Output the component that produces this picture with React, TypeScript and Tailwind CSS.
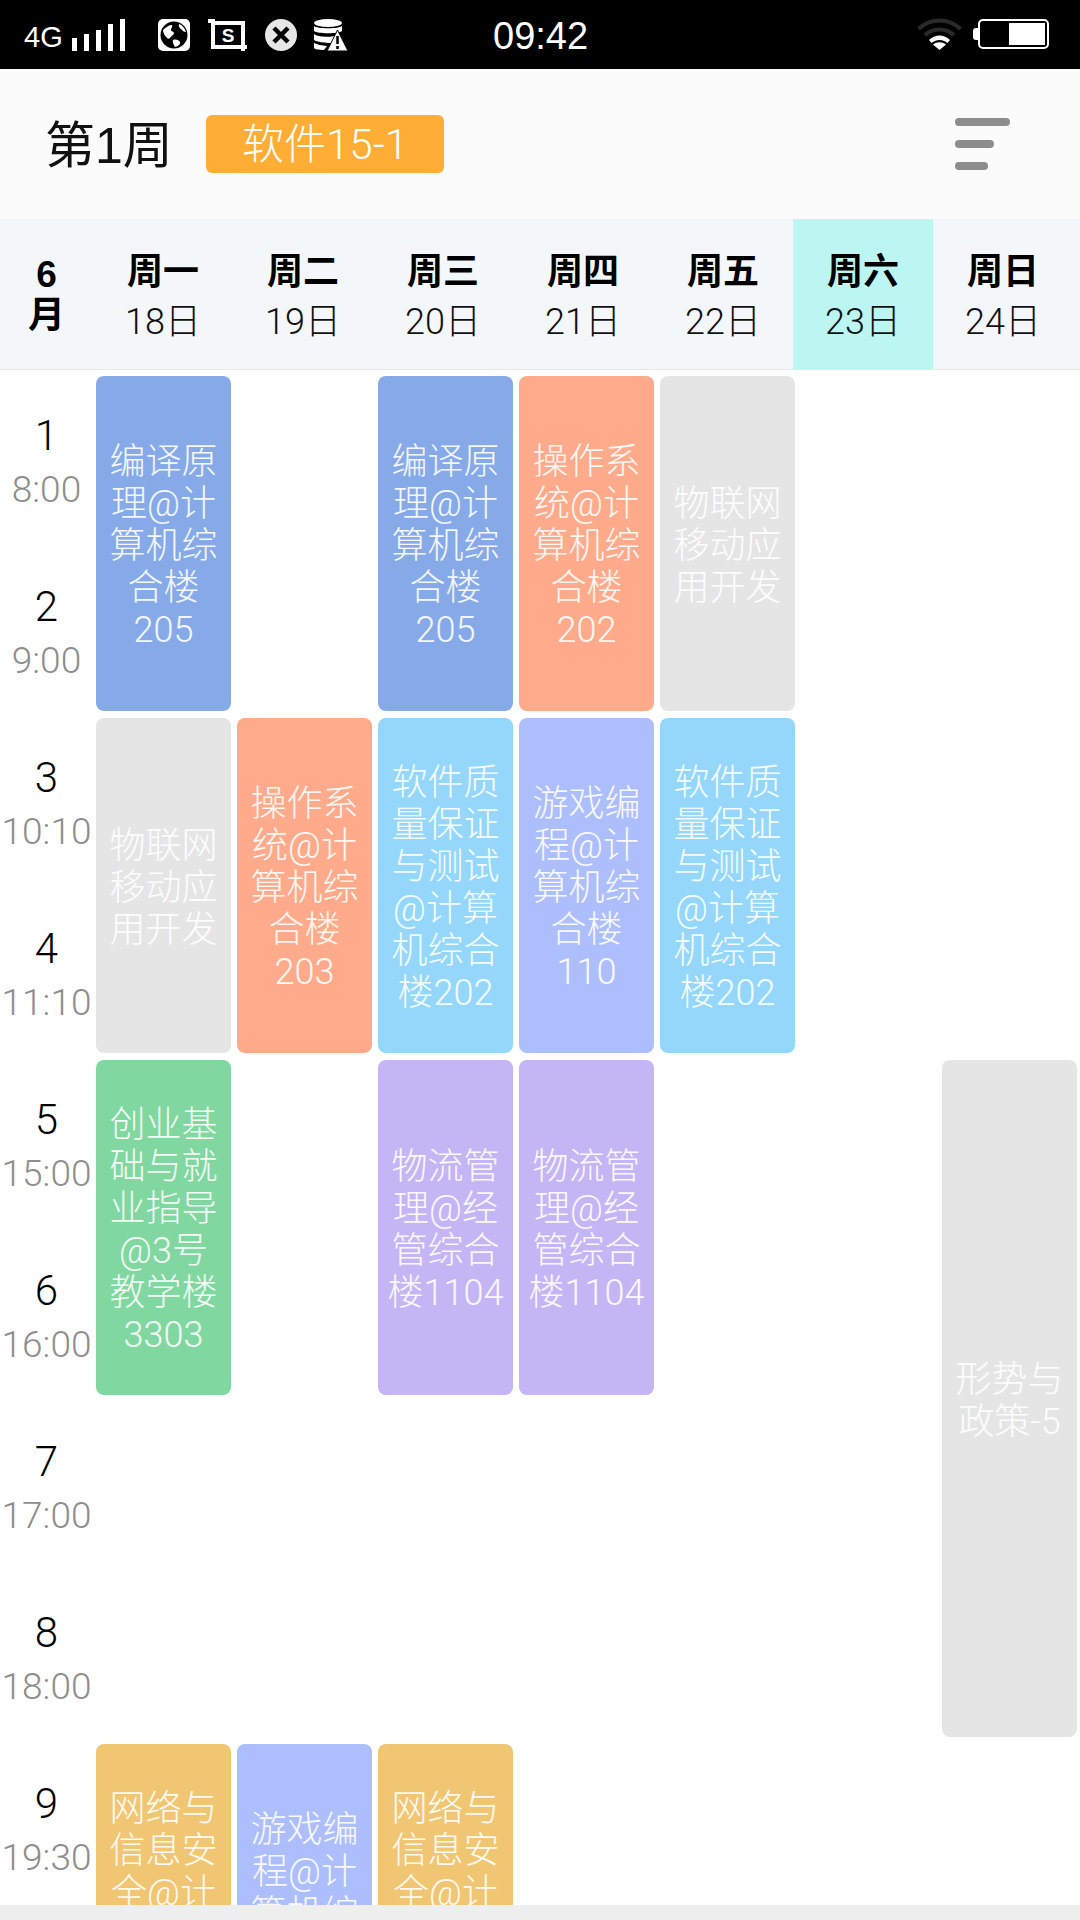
const F = "[font-family:'Liberation_Sans','Noto_Sans_CJK_SC',sans-serif]";
const L = "[font-family:'Roboto','Noto_Sans_CJK_SC',sans-serif] font-light";

const days = [
  ['周一', '18日'], ['周二', '19日'], ['周三', '20日'], ['周四', '21日'], ['周五', '22日'], ['周六', '23日'], ['周日', '24日'],
];
const periods = [
  ['1', '8:00'], ['2', '9:00'], ['3', '10:10'], ['4', '11:10'], ['5', '15:00'], ['6', '16:00'], ['7', '17:00'], ['8', '18:00'], ['9', '19:30'],
];

type Course = { cls: string; text: string; place: string };
const courses: Course[] = [
  { cls: 'bg-[#86aae8]', text: '编译原理@计算机综合楼205', place: 'col-start-2 row-start-1 row-span-2' },
  { cls: 'bg-[#86aae8]', text: '编译原理@计算机综合楼205', place: 'col-start-4 row-start-1 row-span-2' },
  { cls: 'bg-[#ffab8b]', text: '操作系统@计算机综合楼202', place: 'col-start-5 row-start-1 row-span-2' },
  { cls: 'bg-[#e5e5e5]', text: '物联网移动应用开发', place: 'col-start-6 row-start-1 row-span-2' },
  { cls: 'bg-[#e5e5e5]', text: '物联网移动应用开发', place: 'col-start-2 row-start-3 row-span-2' },
  { cls: 'bg-[#ffab8b]', text: '操作系统@计算机综合楼203', place: 'col-start-3 row-start-3 row-span-2' },
  { cls: 'bg-[#94d7fa]', text: '软件质量保证与测试@计算机综合楼202', place: 'col-start-4 row-start-3 row-span-2' },
  { cls: 'bg-[#adbefc]', text: '游戏编程@计算机综合楼110', place: 'col-start-5 row-start-3 row-span-2' },
  { cls: 'bg-[#94d7fa]', text: '软件质量保证与测试@计算机综合楼202', place: 'col-start-6 row-start-3 row-span-2' },
  { cls: 'bg-[#80d8a0]', text: '创业基础与就业指导@3号教学楼3303', place: 'col-start-2 row-start-5 row-span-2' },
  { cls: 'bg-[#c4b6f4]', text: '物流管理@经管综合楼1104', place: 'col-start-4 row-start-5 row-span-2' },
  { cls: 'bg-[#c4b6f4]', text: '物流管理@经管综合楼1104', place: 'col-start-5 row-start-5 row-span-2' },
  { cls: 'bg-[#e5e5e5]', text: '形势与政策-5', place: 'col-start-8 row-start-5 row-span-4' },
  { cls: 'bg-[#f0c672]', text: '网络与信息安全@计算机综合楼205', place: 'col-start-2 row-start-9 row-span-2' },
  { cls: 'bg-[#adbefc]', text: '游戏编程@计算机综合楼110', place: 'col-start-3 row-start-9 row-span-2' },
  { cls: 'bg-[#f0c672]', text: '网络与信息安全@计算机综合楼205', place: 'col-start-4 row-start-9 row-span-2' },
];

function StatusBar() {
  return (
    <div className="h-[69px] bg-black flex items-center text-white relative shrink-0">
      <span className="absolute left-[24px] top-[21px] text-[29px] leading-[33px]">4G</span>
      <div className="ml-[72px] flex items-end gap-[7px] h-[32px] mt-[1px] shrink-0">
        <div className="w-[5px] h-[13px] bg-white" />
        <div className="w-[5px] h-[17px] bg-white" />
        <div className="w-[5px] h-[21px] bg-white" />
        <div className="w-[5px] h-[27px] bg-white" />
        <div className="w-[5px] h-[32px] bg-white" />
      </div>
      <svg className="ml-[33px] shrink-0" width="32" height="32" viewBox="0 0 32 32">
        <rect width="32" height="32" rx="5" fill="#fff" />
        <circle cx="16" cy="16" r="13.500" fill="#000" />
        <path d="M5 11c3-3 6-5 9-5 1 2-1 3-1 5s3 1 3 3-3 3-4 5c-1 1-2 1-3 0-2-2-4-5-4-8zM21 5c3 1 6 4 7 8-2 0-3-1-4-2s-4-3-3-6zM15 21c3-1 6 0 7 2s-3 5-5 5c-1-2-3-5-2-7z" fill="#fff" />
      </svg>
      <svg className="ml-[18px] shrink-0" width="39" height="32" viewBox="0 0 39 32">
        <path d="M0 2h5M5 0v28h30V4H5M35 28v4M35 28h4" fill="none" stroke="#fff" strokeWidth="4" />
        <text x="20" y="23" fontSize="19" fontWeight="700" textAnchor="middle" fill="#fff" fontFamily="Liberation Sans">S</text>
      </svg>
      <svg className="ml-[18px] shrink-0" width="32" height="32" viewBox="0 0 32 32">
        <circle cx="16" cy="16" r="16" fill="#e6e6e6" />
        <path d="M9 9l14 14M23 9L9 23" stroke="#000" strokeWidth="4.500" />
      </svg>
      <svg className="ml-[17px] shrink-0" width="34" height="32" viewBox="0 0 34 32">
        <ellipse cx="14" cy="4" rx="14" ry="4" fill="#fff" />
        <path d="M0 7c3 3 25 3 28 0v5c-3 3-25 3-28 0zM0 15c3 3 18 4 24 1l-7 8c-6 0-14-1-17-3zM0 24c3 1.500 8 2.500 13 3l-3 4c-5 0-10-1-10-2z" fill="#fff" />
        <path d="M23.500 11L34 32H13z" fill="#fff" stroke="#000" strokeWidth="1" />
        <path d="M23.500 17v8M23.500 27v3" stroke="#000" strokeWidth="2.500" />
      </svg>
      <span className="absolute left-[493px] top-[14px] text-[38px] leading-[44px]">09:42</span>
      <svg className="absolute left-[917px] top-[18px]" width="45" height="32" viewBox="0 0 45 32">
        <path d="M1.500 11c12-11.500 30-11.500 42 0" fill="none" stroke="#2a2a2a" strokeWidth="4" />
        <path d="M8 17c8-7.500 21-7.500 29 0" fill="none" stroke="#2a2a2a" strokeWidth="4" />
        <path d="M12 22c6-6 15-6 21 0l-2.500 3c-4.500-4-11.500-4-16 0z" fill="#fff" />
        <path d="M16 26.500c4-3 9-3 13 0L22.500 32z" fill="#fff" />
      </svg>
      <div className="absolute left-[973px] top-[28px] w-[5px] h-[12px] bg-white rounded-l-[3px]" />
      <div className="absolute left-[978px] top-[19px] w-[71px] h-[30px] rounded-[5px] border-[2px] border-white p-[2px] flex justify-end">
        <div className="w-[36px] bg-white" />
      </div>
    </div>
  );
}

function TopBar() {
  return (
    <div className="h-[150px] bg-[#fbfbfb] flex items-center shrink-0">
      <span className="ml-[45px] w-[124px] text-[50px] leading-none text-[#111] pt-[4px] whitespace-nowrap">第1周</span>
      <div className={`ml-[37px] w-[238px] h-[58px] rounded-[6px] bg-[#ffae35] text-white text-[42px] flex items-center justify-center ${L}`}>
        软件15-1
      </div>
      <div className="ml-auto mr-[70px] w-[55px] flex flex-col gap-[14px]">
        <div className="w-[55px] h-[8px] rounded-full bg-[#8d8d8d]" />
        <div className="w-[39px] h-[8px] rounded-full bg-[#8d8d8d]" />
        <div className="w-[33px] h-[8px] rounded-full bg-[#8d8d8d]" />
      </div>
    </div>
  );
}

function WeekHeader() {
  return (
    <div className="h-[151px] bg-[#f4f7f9] border-b border-[#e8e8e8] flex shrink-0">
      <div className="w-[93px] flex flex-col items-center justify-center pt-[1px] font-bold text-[37px] leading-[41px] text-black">
        <span>6</span>
        <span>月</span>
      </div>
      {days.map(([d, n], i) => (
        <div key={d} className={`w-[140px] flex flex-col items-center justify-center gap-[8px] pt-[5px] ${i === 5 ? 'bg-[#bcf6f2]' : ''}`}>
          <span className="font-bold text-[36px] leading-[42px] text-black">{d}</span>
          <span className={`text-[36px] leading-[42px] text-[#111] ${L}`}>{n}</span>
        </div>
      ))}
    </div>
  );
}

function Timetable() {
  return (
    <div className="flex-1 min-h-0 overflow-hidden bg-white">
      <div className="grid grid-cols-[93px_repeat(7,141px)] auto-rows-[171px] w-[1080px]">
        {periods.map(([n, t], i) => (
          <div key={n} className="col-start-1 flex flex-col items-center justify-center gap-[9px] pt-[11px]" style={{ gridRowStart: i + 1 }}>
            <span className={`text-[42px] leading-[48px] text-black ${L}`}>{n}</span>
            <span className={`text-[37px] leading-[42px] text-[#8e8e8e] whitespace-nowrap ${L}`}>{t}</span>
          </div>
        ))}
        {courses.map((c, i) => (
          <div key={i} className={`${c.place} ${c.cls} mt-[6px] mb-[1px] mx-[3px] rounded-[8px] flex items-center justify-center px-[8px] pt-[4px] text-center text-white/90 text-[36px] leading-[42px] overflow-hidden ${L}`}>
            {c.text}
          </div>
        ))}
      </div>
    </div>
  );
}

export default function App() {
  return (
    <div className={`w-[1080px] h-[1920px] flex flex-col overflow-hidden ${F}`}>
      <StatusBar />
      <TopBar />
      <WeekHeader />
      <Timetable />
      <div className="h-[15px] bg-[#eeeeee] shrink-0" />
    </div>
  );
}
